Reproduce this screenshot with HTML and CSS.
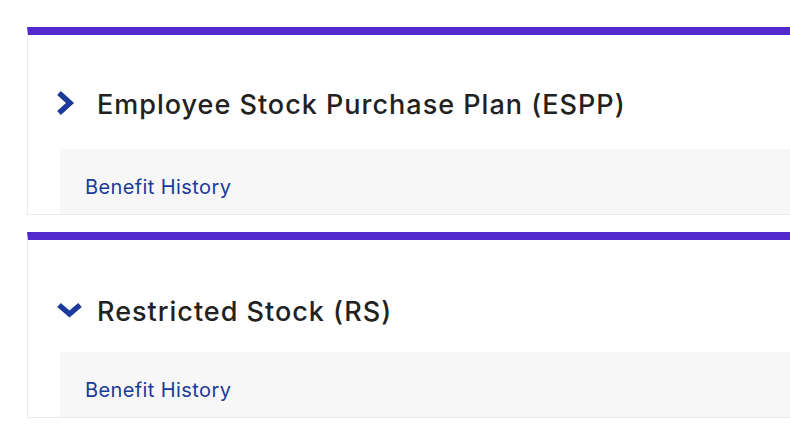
FILE: index.html
```html
<!DOCTYPE html>
<html lang="en">
<head>
    <meta charset="UTF-8">
    <meta name="viewport" content="width=device-width, initial-scale=1.0">
    <title>Stock Plans</title>
    <link rel="stylesheet" href="styles.css">
</head>
<body>
    <div class="plan-card">
        <div class="plan-header">
            <svg class="chevron" width="26" height="26" viewBox="0 0 26 26">
                <path d="M3 1 L14 11 L3 21" fill="none" stroke="#1b3a9a" stroke-width="5.5"/>
            </svg>
            <h2>Employee Stock Purchase Plan (ESPP)</h2>
        </div>
        <div class="plan-links">
            <a href="#">Benefit History</a>
        </div>
    </div>

    <div class="plan-card plan-card--open">
        <div class="plan-header">
            <svg class="chevron" width="26" height="26" viewBox="0 0 26 26">
                <path d="M3 6 L13.5 15 L24 6" fill="none" stroke="#1b3a9a" stroke-width="5.5"/>
            </svg>
            <h2>Restricted Stock (RS)</h2>
        </div>
        <div class="plan-links">
            <a href="#">Benefit History</a>
        </div>
    </div>
</body>
</html>
```

FILE: styles.css
```css
body {
    margin: 0;
    padding: 27px 0 0 27px;
    font-family: Inter, "Noto Sans", sans-serif;
    background: #fff;
    overflow: hidden;
}
.plan-card {
    border: 1px solid #e6ecee;
    border-top: 8px solid #5229cd;
    border-right: none;
    margin-bottom: 17px;
}
.plan-header {
    display: flex;
    align-items: center;
    gap: 15px;
    padding: 54px 0 28px 28px;
}
.plan-card--open .plan-header {
    padding: 56px 0 24px 28px;
}
.chevron {
    flex-shrink: 0;
    overflow: visible;
}
h2 {
    margin: 0;
    font-size: 27px;
    line-height: 32px;
    font-weight: 500;
    letter-spacing: 1px;
    color: #222;
}
.plan-links {
    margin-left: 32px;
    background: #f7f7f7;
    padding: 25px 25px 14px;
}
.plan-links a {
    font-size: 20px;
    line-height: 26px;
    letter-spacing: 0.4px;
    color: #1b3a9a;
    text-decoration: none;
}
```
